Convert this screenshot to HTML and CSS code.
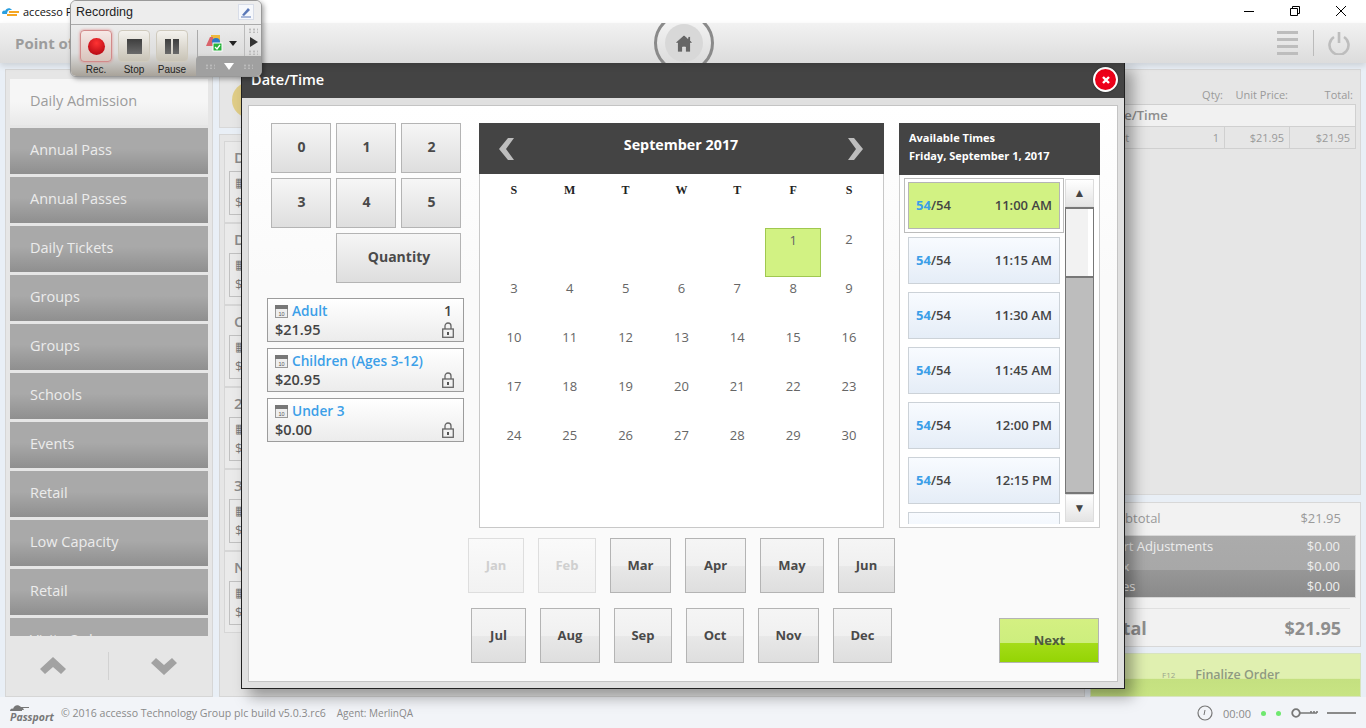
FILE: index.html
```html
<!DOCTYPE html>
<html lang="en">
<head>
<meta charset="utf-8">
<title>accesso Passport</title>
<link rel="stylesheet" href="styles.css">
</head>
<body>
<div class="app">
  <div class="titlebar">
    <svg class="tb-logo" width="17" height="10" viewBox="0 0 17 10"><path d="M0 6c0-2 2-3 3-2 1-3 5-4 7-1h-2C6 3 5 5 5 7H2C1 7 0 7 0 6z" fill="#2a9fe0"/><rect x="7" y="4" width="10" height="2" fill="#f5a623"/><rect x="5" y="7" width="10" height="2" fill="#f5a623"/></svg>
    <span class="tb-title">accesso P</span>
    <div class="win-controls">
      <svg width="12" height="12" viewBox="0 0 12 12"><path d="M1 6.500h10" stroke="#000" fill="none"/></svg>
      <svg width="12" height="12" viewBox="0 0 12 12"><path d="M1.500 3.500h7v7h-7zM3.500 3.500v-2h7v7h-2" stroke="#000" fill="none"/></svg>
      <svg width="12" height="12" viewBox="0 0 12 12"><path d="M1 1l10 10M11 1L1 11" stroke="#000" fill="none"/></svg>
    </div>
  </div>

  <header class="header">
    <div class="hdr-title">Point of Sale</div>
    <div class="home-ring"><div class="home-disc">
      <svg width="18" height="17" viewBox="0 0 18 17"><path d="M9 0L0 8h2.500v9h5v-5h3v5h5V8H18l-2.500-2.200V1.500h-2.500v2z" fill="#666" stroke="#eee" stroke-width=".6"/></svg>
    </div></div>
    <div class="hdr-right">
      <div class="burger"><i></i><i></i><i></i><i></i></div>
      <div class="hdr-div"></div>
      <svg width="22" height="24" viewBox="0 0 22 24"><path d="M6 6a9.500 9.500 0 1 0 10 0" fill="none" stroke="#bdbdbd" stroke-width="2.600"/><path d="M11 1v11" stroke="#bdbdbd" stroke-width="2.600"/></svg>
    </div>
  </header>

  <main class="main">
    <aside class="cats">
      <div class="cat-list">
        <div class="cat cat-on">Daily Admission</div>
        <div class="cat">Annual Pass</div>
        <div class="cat">Annual Passes</div>
        <div class="cat">Daily Tickets</div>
        <div class="cat">Groups</div>
        <div class="cat">Groups</div>
        <div class="cat">Schools</div>
        <div class="cat">Events</div>
        <div class="cat">Retail</div>
        <div class="cat">Low Capacity</div>
        <div class="cat">Retail</div>
        <div class="cat">Visits Only</div>
      </div>
      <div class="cat-nav">
        <svg width="26" height="18" viewBox="0 0 26 18"><path d="M13 0l13 12-5 5-8-7-8 7-5-5z" fill="#a2a2a2"/></svg>
        <div class="cat-nav-div"></div>
        <svg width="26" height="18" viewBox="0 0 26 18"><path d="M13 18L0 6l5-5 8 7 8-7 5 5z" fill="#a2a2a2"/></svg>
      </div>
    </aside>

    <section class="products">
      <div class="search"><div class="search-dot"></div></div>
      <div class="prod-list">
        <div class="prod"><div class="prod-name">Daily</div><div class="prod-box">▦<br>$</div></div>
        <div class="prod"><div class="prod-name">Daily</div><div class="prod-box">▦<br>$</div></div>
        <div class="prod"><div class="prod-name">Child</div><div class="prod-box">▦<br>$</div></div>
        <div class="prod"><div class="prod-name">2 Day</div><div class="prod-box">▦<br>$</div></div>
        <div class="prod"><div class="prod-name">3 Day</div><div class="prod-box">▦<br>$</div></div>
        <div class="prod"><div class="prod-name">Night</div><div class="prod-box">▦<br>$</div></div>
      </div>
    </section>

    <aside class="cart">
      <div class="cart-top">
        <div class="cart-cols"><span class="c-qty">Qty:</span><span class="c-unit">Unit Price:</span><span class="c-tot">Total:</span></div>
        <div class="cart-head">Date/Time</div>
        <div class="cart-row"><span class="cr-name">Adult</span><span class="cr-qty">1</span><span class="cr-unit">$21.95</span><span class="cr-tot">$21.95</span></div>
      </div>
      <div class="totals">
        <div class="sub"><span>Subtotal</span><span>$21.95</span></div>
        <div class="adj">
          <div><span>Cart Adjustments</span><span>$0.00</span></div>
          <div><span>Tax</span><span>$0.00</span></div>
          <div><span>Fees</span><span>$0.00</span></div>
        </div>
        <div class="grand"><span>Total</span><span>$21.95</span></div>
      </div>
      <div class="finalize"><span class="f12">F12</span><span>Finalize Order</span></div>
    </aside>
  </main>

  <footer class="footer">
    <div class="pp-logo"><svg width="24" height="8" viewBox="0 0 24 8"><path d="M0 7c0-2 2-3 3-2 1-4 5-5 8-2h8v1h-6l1 2h-2v1z" fill="#777"/></svg><span class="pp-name">Passport</span></div>
    <span class="copy">© 2016 accesso Technology Group plc build v5.0.3.rc6</span>
    <span class="agent">Agent: MerlinQA</span>
    <div class="foot-right">
      <svg width="16" height="16" viewBox="0 0 16 16"><circle cx="8" cy="8" r="7" fill="none" stroke="#777" stroke-width="1.200"/><path d="M8 5L7 10" stroke="#777"/></svg>
      <span class="clock">00:00</span>
      <i class="dot"></i><i class="dot"></i>
      <svg width="27" height="10" viewBox="0 0 27 10"><circle cx="5" cy="5" r="3.800" fill="none" stroke="#777" stroke-width="1.800"/><path d="M9 5h17M20 3v2M23 3v2M26 3v2" stroke="#777" stroke-width="1.600" fill="none"/></svg>
      <span class="foot-line"></span>
    </div>
  </footer>
</div>

<div class="modal">
  <div class="m-title"><span>Date/Time</span>
    <div class="m-close"><svg width="10" height="10" viewBox="0 0 10 10"><path d="M2 2l6 6M8 2L2 8" stroke="#fff" stroke-width="2.400"/></svg></div>
  </div>
  <div class="m-body"><div class="m-inner">
    <div class="m-top">
      <div class="m-left">
        <div class="keypad">
          <button class="key">0</button><button class="key">1</button><button class="key">2</button>
          <button class="key">3</button><button class="key">4</button><button class="key">5</button>
          <button class="key key-q">Quantity</button>
        </div>
        <div class="tickets">
          <div class="ticket">
            <div class="t-line"><svg class="t-cal" width="13" height="14" viewBox="0 0 13 14"><rect x=".5" y="2.500" width="12" height="11" fill="#eee" stroke="#999"/><rect x="0" y="1" width="13" height="4" fill="#777"/><text x="6.500" y="11.500" font-size="5.500" text-anchor="middle" fill="#555" font-family="Liberation Sans">10</text></svg><span class="t-name">Adult</span><span class="t-qty">1</span></div>
            <div class="t-line"><span class="t-price">$21.95</span><svg class="t-lock" width="12" height="16" viewBox="0 0 12 16"><path d="M3 7V4a3 3 0 0 1 6 0v3" fill="none" stroke="#666" stroke-width="1.300"/><rect x=".7" y="7" width="10.600" height="8.300" fill="#f2f2f2" stroke="#666" stroke-width="1.300"/><rect x="5" y="10" width="2" height="3" fill="#555"/></svg></div>
          </div>
          <div class="ticket">
            <div class="t-line"><svg class="t-cal" width="13" height="14" viewBox="0 0 13 14"><rect x=".5" y="2.500" width="12" height="11" fill="#eee" stroke="#999"/><rect x="0" y="1" width="13" height="4" fill="#777"/><text x="6.500" y="11.500" font-size="5.500" text-anchor="middle" fill="#555" font-family="Liberation Sans">10</text></svg><span class="t-name">Children (Ages 3-12)</span></div>
            <div class="t-line"><span class="t-price">$20.95</span><svg class="t-lock" width="12" height="16" viewBox="0 0 12 16"><path d="M3 7V4a3 3 0 0 1 6 0v3" fill="none" stroke="#666" stroke-width="1.300"/><rect x=".7" y="7" width="10.600" height="8.300" fill="#f2f2f2" stroke="#666" stroke-width="1.300"/><rect x="5" y="10" width="2" height="3" fill="#555"/></svg></div>
          </div>
          <div class="ticket">
            <div class="t-line"><svg class="t-cal" width="13" height="14" viewBox="0 0 13 14"><rect x=".5" y="2.500" width="12" height="11" fill="#eee" stroke="#999"/><rect x="0" y="1" width="13" height="4" fill="#777"/><text x="6.500" y="11.500" font-size="5.500" text-anchor="middle" fill="#555" font-family="Liberation Sans">10</text></svg><span class="t-name">Under 3</span></div>
            <div class="t-line"><span class="t-price">$0.00</span><svg class="t-lock" width="12" height="16" viewBox="0 0 12 16"><path d="M3 7V4a3 3 0 0 1 6 0v3" fill="none" stroke="#666" stroke-width="1.300"/><rect x=".7" y="7" width="10.600" height="8.300" fill="#f2f2f2" stroke="#666" stroke-width="1.300"/><rect x="5" y="10" width="2" height="3" fill="#555"/></svg></div>
          </div>
        </div>
      </div>

      <div class="cal">
        <div class="cal-head">
          <svg width="16" height="22" viewBox="0 0 16 22"><path d="M10 0h6L8 11l8 11h-6L1 11z" fill="#bdbdbd"/></svg>
          <span>September 2017</span>
          <svg width="16" height="22" viewBox="0 0 16 22"><path d="M6 0H0l8 11-8 11h6l9-11z" fill="#bdbdbd"/></svg>
        </div>
        <div class="cal-week"><b>S</b><b>M</b><b>T</b><b>W</b><b>T</b><b>F</b><b>S</b></div>
        <div class="cal-grid">
          <div></div><div></div><div></div><div></div><div></div><div class="sel">1</div><div>2</div>
          <div>3</div><div>4</div><div>5</div><div>6</div><div>7</div><div>8</div><div>9</div>
          <div>10</div><div>11</div><div>12</div><div>13</div><div>14</div><div>15</div><div>16</div>
          <div>17</div><div>18</div><div>19</div><div>20</div><div>21</div><div>22</div><div>23</div>
          <div>24</div><div>25</div><div>26</div><div>27</div><div>28</div><div>29</div><div>30</div>
        </div>
      </div>

      <div class="times">
        <div class="times-head"><div>Available Times</div><div>Friday, September 1, 2017</div></div>
        <div class="times-body">
          <div class="slots">
            <div class="slot-frame"><div class="slot slot-on"><span><em>54</em>/54</span><span>11:00 AM</span></div></div>
            <div class="slot"><span><em>54</em>/54</span><span>11:15 AM</span></div>
            <div class="slot"><span><em>54</em>/54</span><span>11:30 AM</span></div>
            <div class="slot"><span><em>54</em>/54</span><span>11:45 AM</span></div>
            <div class="slot"><span><em>54</em>/54</span><span>12:00 PM</span></div>
            <div class="slot"><span><em>54</em>/54</span><span>12:15 PM</span></div>
            <div class="slot"></div>
          </div>
          <div class="sbar">
            <div class="sb-btn">▲</div>
            <div class="sb-track"><div class="sb-thumb"></div></div>
            <div class="sb-btn">▼</div>
          </div>
        </div>
      </div>
    </div>

    <div class="m-bottom">
      <div class="months">
        <div class="m-row">
          <button class="mon off w56">Jan</button><button class="mon off w58">Feb</button><button class="mon w61">Mar</button><button class="mon w61">Apr</button><button class="mon w64">May</button><button class="mon w57">Jun</button>
        </div>
        <div class="m-row m-row2">
          <button class="mon w55">Jul</button><button class="mon w60">Aug</button><button class="mon w58">Sep</button><button class="mon w58">Oct</button><button class="mon w61">Nov</button><button class="mon w59">Dec</button>
        </div>
      </div>
      <button class="next">Next</button>
    </div>
  </div></div>
</div>

<div class="recorder">
  <div class="r-title"><span>Recording</span>
    <div class="r-pen"><svg width="12" height="12" viewBox="0 0 12 12"><path d="M2 9l6-7 2 2-6 6z" fill="#5a78b8"/><path d="M1 11h10" stroke="#5a78b8"/></svg></div>
  </div>
  <div class="r-body">
    <div class="r-btns">
      <div class="r-item"><div class="r-btn r-rec"><i class="rec-dot"></i></div><span>Rec.</span></div>
      <div class="r-item"><div class="r-btn"><i class="stop-sq"></i></div><span>Stop</span></div>
      <div class="r-item"><div class="r-btn"><i class="pause-bar"></i><i class="pause-bar"></i></div><span>Pause</span></div>
    </div>
    <div class="r-sep"></div>
    <div class="r-tool">
      <svg width="18" height="18" viewBox="0 0 18 18"><rect x="6" y="1" width="9" height="11" fill="#eeb93c"/><path d="M1 12L5 3h3v9z" fill="#d9636a"/><circle cx="11" cy="8" r="4" fill="#2b79c8"/><rect x="8" y="9" width="9" height="8" fill="#27b23b" stroke="#fff"/><path d="M10 13l2 2 3-4" stroke="#fff" fill="none" stroke-width="1.300"/></svg>
      <i class="r-caret"></i>
    </div>
    <div class="r-grip"><i class="grip-dots"></i><i class="r-play"></i><i class="grip-dots"></i></div>
    <div class="r-strip"><i class="grip-dots"></i><i class="r-down"></i><i class="grip-dots"></i></div>
  </div>
</div>
</body>
</html>
```
FILE: styles.css
```css
* { box-sizing: border-box; }
html, body { margin: 0; height: 728px; overflow: hidden; }
body { position: relative; font-family: "Open Sans", "Noto Sans", sans-serif; background: #e9eff6; color: #444; }
button { font-family: inherit; cursor: default; padding: 0; }
em { font-style: normal; }

.app { display: flex; flex-direction: column; height: 728px; }

.titlebar { height: 23px; background: #fff; display: flex; align-items: center; padding-left: 2px; flex: none; }
.tb-logo { margin-right: 4px; }
.tb-title { font-size: 11px; color: #111; }
.win-controls { margin-left: auto; display: flex; gap: 34px; padding-right: 19px; margin-top: -2px; }

.header { position: relative; height: 40px; flex: none; background: linear-gradient(#f2f2f2, #dcdcdc); box-shadow: 0 3px 6px rgba(0,0,0,.12); display: flex; align-items: center; padding: 0 16px 0 15px; z-index: 1; overflow: hidden; }
.hdr-title { font-size: 15px; font-weight: 700; color: #9c9c9c; }
.home-ring { position: absolute; left: 654px; top: -10px; width: 60px; height: 60px; border-radius: 50%; border: 3px solid #8a8a8a; display: flex; align-items: center; justify-content: center; }
.home-disc { width: 38px; height: 38px; border-radius: 50%; background: #d8d8d8; display: flex; align-items: center; justify-content: center; }
.hdr-right { margin-left: auto; display: flex; align-items: center; gap: 14px; }
.burger { width: 21px; display: flex; flex-direction: column; gap: 4px; margin-right: 1px; }
.burger i { height: 3px; background: #bdbdbd; display: block; }
.hdr-div { width: 1px; height: 26px; background: #bbb; }

.main { flex: 1; min-height: 0; display: flex; padding: 6px 5px 0; }

.cats { width: 208px; flex: none; background: #e6e6e6; border: 1px solid #d6d6d6; display: flex; flex-direction: column; padding: 9px 4px 0; }
.cat-list { height: 557px; overflow: hidden; display: flex; flex-direction: column; gap: 3px; flex: none; }
.cat { height: 46px; flex: none; background: linear-gradient(#a9a9a9 0, #a9a9a9 45%, #8f8f8f 100%); color: #ececec; font-size: 14.500px; line-height: 43px; padding-left: 20px; }
.cat-on { background: linear-gradient(#f6f6f6 0, #f6f6f6 50%, #e9e9e9 100%); color: #9c9c9c; }
.cat-nav { flex: 1; display: flex; align-items: center; justify-content: space-between; padding: 0 31px 0 30px; }
.cat-nav-div { width: 1px; height: 28px; background: #d2d2d2; }

.products { width: 866px; flex: none; margin-left: 6px; display: flex; flex-direction: column; gap: 6px; }
.search { height: 59px; background: #e6e6e6; border: 1px solid #d8d8d8; padding: 12px 0 0 12px; flex: none; }
.search-dot { width: 36px; height: 36px; border-radius: 50%; background: #e0cd87; }
.prod-list { flex: 1; min-height: 0; background: #e6e6e6; border: 1px solid #d6d6d6; padding: 6px 4px; display: flex; flex-direction: column; overflow: hidden; }
.prod { height: 82px; flex: none; border: 1px solid #d6d6d6; background: #eaeaea; padding: 3px 4px; }
.prod-name { font-size: 15px; font-weight: 600; color: #8a8a8a; padding-left: 5px; line-height: 24px; }
.prod-box { border: 1px solid #c0c0c0; height: 44px; padding-left: 5px; font-size: 13px; line-height: 20px; color: #777; margin-top: 2px; }

.cart { flex: 1; min-width: 0; margin-left: 5px; display: flex; flex-direction: column; }
.cart-top { height: 426px; flex: none; background: #e6e6e6; border: 1px solid #d8d8d8; padding-top: 17px; font-size: 11px; color: #9a9a9a; }
.cart-cols { display: flex; justify-content: flex-end; height: 17px; line-height: 16px; padding-right: 7px; }
.c-qty { width: 40px; text-align: right; }
.c-unit { width: 65px; text-align: right; }
.c-tot { width: 65px; text-align: right; }
.cart-head { margin: 0 4px 0 5px; height: 23px; background: #f1f1f1; border: 1px solid #d0d0d0; font-size: 13px; font-weight: 600; line-height: 21px; color: #8e8e8e; padding-left: 5px; }
.cart-row { display: flex; height: 22px; margin: 0 4px 0 5px; border: 1px solid #d0d0d0; border-top: 0; line-height: 21px; }
.cr-name { flex: 1; padding-left: 5px; }
.cr-qty { width: 40px; text-align: right; padding-right: 5px; border-right: 1px solid #d0d0d0; }
.cr-unit { width: 65px; text-align: right; padding-right: 5px; border-right: 1px solid #d0d0d0; }
.cr-tot { width: 65px; text-align: right; padding-right: 5px; }
.totals { height: 145px; flex: none; margin-top: 7px; background: #f2f2f2; border: 1px solid #d8d8d8; font-size: 13px; color: #9a9a9a; }
.sub { display: flex; justify-content: space-between; height: 30px; align-items: center; padding: 0 19px 0 19px; margin-bottom: 2px; }
.adj { height: 63px; margin-right: 4px; background: linear-gradient(#ababab 0, #a8a8a8 55%, #979797 56%, #8a8a8a 100%); color: #eee; padding: 0 15px 0 17px; border: 1px solid #d8d8d8; border-left: 0; }
.adj div { display: flex; justify-content: space-between; height: 20px; line-height: 20px; font-weight: 500; }
.grand { display: flex; justify-content: space-between; align-items: center; margin: 10px 10px 0 0; height: 38px; border-top: 1px solid #e0e0e0; padding: 0 9px 0 10px; font-size: 18px; font-weight: 700; color: #8e8e8e; }
.finalize { height: 44px; flex: none; margin-top: 6px; background: linear-gradient(#e0f0b0 0, #e0f0b0 58%, #c4e080 60%, #c8e483 100%); border: 1px solid #d8e4c0; display: flex; align-items: center; font-size: 12.500px; font-weight: 600; color: #8f9a80; padding: 0 0 2px 71px; gap: 20px; }
.f12 { font-size: 8px; font-weight: 400; color: #9aa48a; }

.footer { height: 31px; flex: none; background: #f2f4f8; display: flex; align-items: center; font-size: 10.600px; color: #8a8a8a; padding: 1px 10px 0 10px; }
.pp-logo { display: flex; flex-direction: column; width: 51px; line-height: 10px; }
.pp-name { font-size: 10.500px; font-weight: 700; font-style: italic; color: #777; }
.agent { margin-left: 11px; font-size: 10px; }
.foot-right { margin-left: auto; display: flex; align-items: center; color: #8a8a8a; font-size: 11px; }
.clock { margin: 0 10px 0 10px; }
.dot { width: 5px; height: 5px; border-radius: 50%; background: #6fe86f; margin-right: 10px; display: block; }
.foot-line { width: 29px; height: 2px; background: #8a8a8a; margin-left: 9px; }

/* Modal */
.modal { position: absolute; left: 241px; top: 62px; width: 884px; height: 627px; background: #e0e0e0; border: 1px solid #222; box-shadow: 8px 8px 14px rgba(0,0,0,.35); display: flex; flex-direction: column; }
.m-title { height: 35px; flex: none; background: #444; color: #fff; display: flex; align-items: center; justify-content: space-between; padding: 0 6px 2px 9px; font-size: 14.500px; font-weight: 600; }
.m-close { width: 25px; height: 25px; border-radius: 50%; background: radial-gradient(#f5001e, #e20015); border: 2px solid #fff; display: flex; align-items: center; justify-content: center; box-shadow: 0 0 2px #222; }
.m-body { flex: 1; min-height: 0; padding: 7px 6px 6px; }
.m-inner { height: 100%; border: 1px solid #c4c4c4; background: linear-gradient(#fff, #fafafa 30%); display: flex; flex-direction: column; padding: 17px 0 0 18px; }
.m-top { display: flex; gap: 15px; height: 405px; flex: none; }

.m-left { width: 197px; flex: none; display: flex; flex-direction: column; gap: 15px; }
.keypad { display: grid; grid-template-columns: repeat(3, 60px); grid-auto-rows: 50px; gap: 5px; padding-left: 4px; }
.key { border: 1px solid #b4b4b4; background: linear-gradient(#f6f6f6, #dedede); font-size: 14px; font-weight: 700; color: #4a4a4a; padding: 0 0 4px 1px; }
.key-q { grid-column: 2 / 4; }
.tickets { display: flex; flex-direction: column; gap: 6px; }
.ticket { height: 44px; border: 1px solid #9c9c9c; background: linear-gradient(#fff, #ececec); padding: 2px 8px 0 7px; display: flex; flex-direction: column; }
.t-line { display: flex; align-items: center; height: 19px; }
.t-cal { margin-right: 4px; flex: none; }
.t-name { color: #3c9fe8; font-size: 13.700px; font-weight: 600; white-space: nowrap; }
.t-qty { margin-left: auto; font-size: 14px; font-weight: 600; color: #444; padding-right: 3px; }
.t-price { font-size: 14.500px; font-weight: 600; color: #444; }
.t-lock { margin-left: auto; margin-right: 1px; }

.cal { width: 405px; flex: none; border: 1px solid #c8c8c8; border-top: 0; display: flex; flex-direction: column; background: #fff; }
.cal-head { height: 51px; flex: none; margin: 0 -1px; background: #444; color: #fff; display: flex; justify-content: space-between; align-items: center; padding: 0 20px 0 19px; font-size: 14.300px; font-weight: 700; }
.cal-head span { margin-top: -8px; }
.cal-week { display: grid; grid-template-columns: repeat(7, 55.850px); padding: 0 6px; height: 31px; align-items: center; font-family: "Liberation Serif", serif; font-size: 12px; color: #222; text-align: center; margin-top: 1px; }
.cal-week b { font-weight: 700; }
.cal-grid { margin-top: 22px; display: grid; grid-template-columns: repeat(7, 55.850px); grid-auto-rows: 49px; padding: 0 6px; font-size: 13px; color: #666; text-align: center; line-height: 22px; }
.sel { background: #d2f283; border: 1px solid #a0c850; }

.times { width: 201px; flex: none; display: flex; flex-direction: column; }
.times-head { height: 52px; flex: none; background: #444; color: #fff; font-size: 11px; font-weight: 700; padding: 6px 10px 0; line-height: 18px; }
.times-body { flex: 1; min-height: 0; border: 1px solid #ccc; border-top: 0; background: #fff; display: flex; padding: 3px 5px 5px 4px; gap: 1px; }
.slots { width: 160px; flex: none; overflow: hidden; display: flex; flex-direction: column; gap: 8px; height: 346px; }
.slot { flex: none; height: 47px; margin: 0 4px; border: 1px solid #ccd2d8; background: linear-gradient(#f8fbff, #e5edf7); display: flex; align-items: center; justify-content: space-between; padding: 0 7px 2px; font-size: 13px; font-weight: 600; color: #444; }
.slot em { color: #3c9fe8; font-weight: 700; }
.slot-frame { flex: none; height: 55px; margin-bottom: -4px; border: 1px solid #bcbcbc; padding: 3px 0; background: #fff; }
.slot-on { background: #d2f283; border-color: #b5b5b5; margin: 0 3px; }
.sbar { flex: 1; display: flex; flex-direction: column; height: 343px; margin-top: 1px; }
.sb-btn { height: 28px; flex: none; background: linear-gradient(#fff, #e4e4e4); border: 1px solid #ddd; font-size: 12px; line-height: 26px; text-align: center; color: #444; }
.sb-track { flex: 1; background: #bdbdbd; border: 1px solid #777; border-top-width: 2px; border-bottom-width: 2px; }
.sb-thumb { height: 69px; background: linear-gradient(90deg, #f2f2f2 80%, #fff 80%); border-bottom: 2px solid #777; }

.m-bottom { flex: 1; display: flex; padding: 10px 0 0 201px; }
.months { width: 427px; flex: none; display: flex; flex-direction: column; gap: 15px; }
.m-row { display: flex; gap: 14px; }
.m-row2 { padding-left: 3px; }
.mon { height: 55px; flex: none; border: 1px solid #b4b4b4; background: linear-gradient(#f5f5f5 0, #f0f0f0 50%, #e8e8e8 52%, #dedede 100%); font-size: 13px; font-weight: 700; color: #4a4a4a; padding-bottom: 2px; }
.mon.off { border-color: #dedede; background: linear-gradient(#fafafa, #f2f2f2); color: #cfcfcf; }
.w55 { width: 55px; } .w56 { width: 56px; } .w57 { width: 57px; } .w58 { width: 58px; } .w59 { width: 59px; }
.w60 { width: 60px; } .w61 { width: 61px; } .w64 { width: 64px; }
.next { width: 100px; height: 45px; margin: 80px 0 0 104px; flex: none; border: 1px solid #b4b4b4; background: linear-gradient(#d4f082 0, #cdee7e 55%, #a4dc18 57%, #94d404 100%); font-size: 13px; font-weight: 700; color: #4e5a40; padding: 0 0 2px 1px; }

/* Recorder */
.recorder { position: absolute; left: 70px; top: 0; width: 192px; height: 77px; border-radius: 6px; border: 1px solid #999; background: #eee; box-shadow: 2px 2px 5px rgba(0,0,0,.35); display: flex; flex-direction: column; overflow: hidden; z-index: 5; }
.r-title { height: 24px; flex: none; display: flex; justify-content: space-between; align-items: center; padding: 0 7px 2px 5px; font-family: "Liberation Sans", sans-serif; font-size: 12.500px; color: #222; background: #ededed; border-bottom: 1px solid #aaa; }
.r-pen { width: 16px; height: 16px; background: #f6f8fc; border: 1px solid #d8dde8; display: flex; align-items: center; justify-content: center; }
.r-body { flex: 1; position: relative; display: flex; padding: 5px 0 0 9px; background: linear-gradient(#ececec, #ddd 55%, #a8a39a); }
.r-btns { display: flex; gap: 6px; }
.r-item { display: flex; flex-direction: column; align-items: center; width: 32px; font-family: "Liberation Sans", sans-serif; font-size: 10px; color: #222; gap: 2px; }
.r-btn { width: 32px; height: 32px; border-radius: 4px; border: 1px solid #cfcabd; background: linear-gradient(#f4f2ee, #c8c3b6); display: flex; align-items: center; justify-content: center; gap: 2px; }
.r-rec { border-color: #d28a8a; background: linear-gradient(#f7e8e6, #d8c4bc); box-shadow: 0 0 3px #e08a8a; }
.rec-dot { width: 17px; height: 17px; border-radius: 50%; background: radial-gradient(circle at 50% 30%, #f33, #a8000e); display: block; }
.stop-sq { width: 15px; height: 15px; background: linear-gradient(#3e3e3e, #6a6a6a); display: block; }
.pause-bar { width: 6px; height: 15px; background: linear-gradient(#3e3e3e, #6a6a6a); display: block; }
.r-sep { width: 1px; height: 30px; background: #aaa; margin-left: 9px; }
.r-tool { display: flex; align-items: flex-start; padding: 4px 0 0 7px; gap: 6px; }
.r-caret { width: 0; height: 0; border: 4.500px solid transparent; border-top: 5px solid #222; border-bottom: 0; margin-top: 7px; display: block; }
.r-grip { position: absolute; right: 0; top: 0; width: 17px; height: 33px; display: flex; flex-direction: column; align-items: center; justify-content: space-between; padding: 3px 0; border-left: 1px solid #bbb; }
.r-play { width: 0; height: 0; border: 5px solid transparent; border-left: 8px solid #333; border-right: 0; display: block; margin-left: 2px; }
.grip-dots { width: 10px; height: 5px; display: block; background: radial-gradient(circle, #bbb 1px, transparent 1.200px) 0 0 / 4px 3px; }
.r-strip { position: absolute; right: 0; bottom: 0; width: 65px; height: 20px; background: #a0a0a0; border-radius: 4px 0 0 0; display: flex; align-items: center; justify-content: space-around; padding: 0 4px; }
.r-down { width: 0; height: 0; border: 5px solid transparent; border-top: 7px solid #fff; border-bottom: 0; display: block; }
```
